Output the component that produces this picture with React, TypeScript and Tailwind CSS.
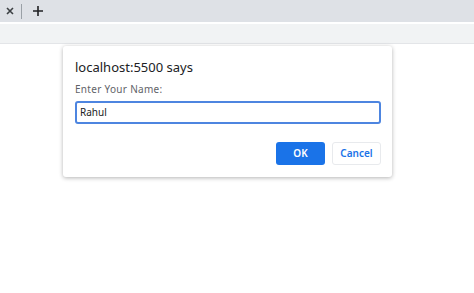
import React from 'react';

export default function App() {
  return (
    <div className="w-[474px] h-[293px] bg-white overflow-hidden relative" style={{ fontFamily: '"Noto Sans", "Open Sans", sans-serif' }}>
      <div className="h-[22px] bg-[#dee1e6] flex items-center">
        <svg className="ml-[6px] w-[8px] h-[8px]" viewBox="0 0 8 8">
          <path d="M1 1L7 7M7 1L1 7" stroke="#3c4043" strokeWidth="1.6" />
        </svg>
        <div className="ml-[7px] w-px h-[15px] bg-[#9aa0a6]" />
        <svg className="ml-[11px] w-[10px] h-[10px]" viewBox="0 0 10 10">
          <path d="M5 0V10M0 5H10" stroke="#202124" strokeWidth="1.6" />
        </svg>
      </div>
      <div className="h-[2px] bg-white" />
      <div className="h-[20px] bg-[#f1f3f4] border-b border-[#e3e5e8]" />

      <div className="absolute left-[63px] top-[46px] w-[329px] h-[131px] bg-white rounded-[3px] shadow-[0_1px_4px_rgba(0,0,0,0.3)] px-[12px] pt-[13px]">
        <div className="text-[13px] text-[#202124] leading-[16px]">localhost:5500 says</div>
        <div className="mt-[8px] text-[10px] text-[#5f6368] leading-[12px] tracking-[0.3px]">Enter Your Name:</div>
        <div className="mt-[6px] h-[23px] w-[306px] border-2 border-[#4d85e0] rounded-[3px] flex items-center px-[3px] text-[10px] text-[#202124]">Rahul</div>
        <div className="mt-[18px] w-[306px] flex justify-end gap-[7px]">
          <div className="w-[49px] h-[23px] rounded-[3px] bg-[#1a73e8] text-white text-[10px] font-semibold flex items-center justify-center">OK</div>
          <div className="w-[49px] h-[23px] rounded-[3px] border border-[#e8eaed] text-[#1a73e8] text-[10px] font-semibold flex items-center justify-center">Cancel</div>
        </div>
      </div>
    </div>
  );
}
